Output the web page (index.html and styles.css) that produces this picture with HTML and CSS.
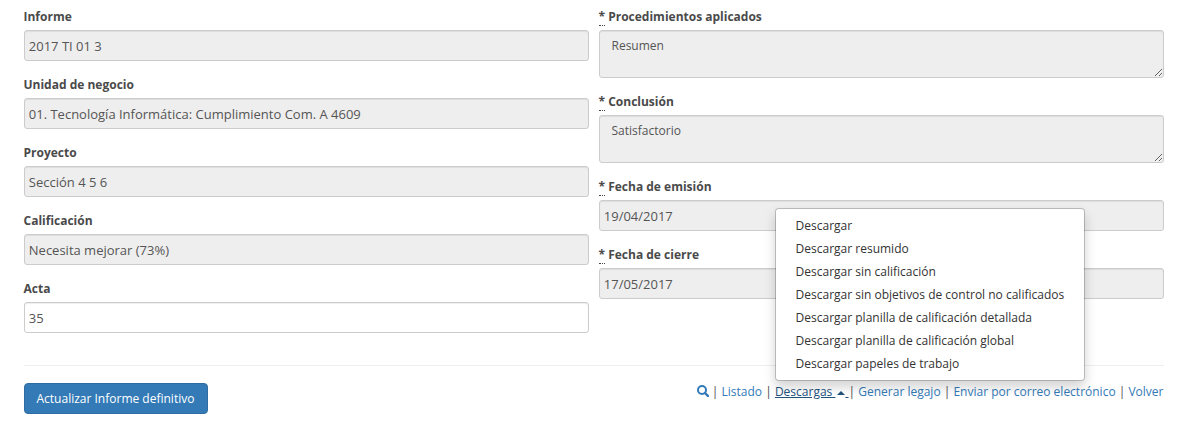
FILE: index.html
```html
<!DOCTYPE html>
<html lang="es">
<head>
<meta charset="utf-8">
<title>Informe definitivo</title>
<link rel="stylesheet" href="styles.css">
</head>
<body>
<form class="page">
  <div class="columns">
    <div class="column">
      <div class="group"><label for="informe">Informe</label><input class="control" id="informe" readonly value="2017 TI 01 3"></div>
      <div class="group"><label for="unidad">Unidad de negocio</label><input class="control" id="unidad" readonly value="01. Tecnología Informática: Cumplimiento Com. A 4609"></div>
      <div class="group"><label for="proyecto">Proyecto</label><input class="control" id="proyecto" readonly value="Sección 4 5 6"></div>
      <div class="group"><label for="calificacion">Calificación</label><input class="control" id="calificacion" readonly value="Necesita mejorar (73%)"></div>
      <div class="group"><label for="acta">Acta</label><input class="control" id="acta" value="35"></div>
    </div>
    <div class="column">
      <div class="group"><label for="proc"><abbr>*</abbr> Procedimientos aplicados</label><textarea class="control area" id="proc" readonly>Resumen</textarea></div>
      <div class="group"><label for="conc"><abbr>*</abbr> Conclusión</label><textarea class="control area" id="conc" readonly>Satisfactorio</textarea></div>
      <div class="group"><label for="emision"><abbr>*</abbr> Fecha de emisión</label><input class="control" id="emision" readonly value="19/04/2017"></div>
      <div class="group"><label for="cierre"><abbr>*</abbr> Fecha de cierre</label><input class="control" id="cierre" readonly value="17/05/2017"></div>
    </div>
  </div>
  <hr class="rule">
  <div class="footer">
    <button class="submit" type="button">Actualizar Informe definitivo</button>
    <div class="links">
      <a href="#" aria-label="Buscar"><svg class="search" viewBox="0 0 12 12"><circle cx="5" cy="5" r="4" fill="none" stroke="currentColor" stroke-width="2"/><path d="M8 8 10.9 10.9" stroke="currentColor" stroke-width="2.4" stroke-linecap="round"/></svg></a> |
      <a href="#">Listado</a> |
      <span class="dropdown"><a class="toggle" href="#">Descargas <span class="caret"></span> </a><span class="menu">
        <a href="#">Descargar</a>
        <a href="#">Descargar resumido</a>
        <a href="#">Descargar sin calificación</a>
        <a href="#">Descargar sin objetivos de control no calificados</a>
        <a href="#">Descargar planilla de calificación detallada</a>
        <a href="#">Descargar planilla de calificación global</a>
        <a href="#">Descargar papeles de trabajo</a>
      </span></span>|
      <a href="#">Generar legajo</a> |
      <a href="#">Enviar por correo electrónico</a> |
      <a href="#">Volver</a>
    </div>
  </div>
</form>
</body>
</html>
```
FILE: styles.css
```css
* { box-sizing: border-box; }
body {
  margin: 0;
  background: #fff;
  color: #4a4a4a;
  font: 12px/17px "Open Sans", sans-serif;
}
a { color: #337ab7; text-decoration: none; }
.page { padding: 8px 33.5px 0 23.5px; }
.columns { display: grid; grid-template-columns: 565px 565px; column-gap: 10px; }
.group { margin-bottom: 15px; }
label { display: block; margin-bottom: 5px; font-weight: 700; }
abbr { border-bottom: 1px dotted #444; }
.control {
  display: block;
  width: 100%;
  height: 31px;
  margin: 0;
  padding: 6px 4.3px;
  border: 1px solid #ccc;
  border-radius: 3px;
  outline: 0;
  background: #fff;
  box-shadow: inset 0 1px 1px rgba(0, 0, 0, .075);
  color: #555;
  font: 13px/17px "Open Sans", sans-serif;
}
.control[readonly] { background: #eee; }
.area { height: 48px; padding: 6px 12px; font-size: 12px; overflow: hidden; resize: vertical; }
.rule { margin: 17px 0; border: 0; border-top: 1px solid #eee; }
.footer { display: flex; justify-content: space-between; align-items: flex-start; }
.submit {
  width: 184px;
  height: 31px;
  padding: 6px 12px;
  border: 1px solid #2e6da4;
  border-radius: 4px;
  background: #337ab7;
  color: #fff;
  font: 12px/17px "Open Sans", sans-serif;
  text-align: left;
}
.links { white-space: nowrap; }
.search { width: 12px; height: 12px; vertical-align: -1px; }
.dropdown { position: relative; }
.toggle { color: #23527c; text-decoration: underline; white-space: pre; }
.caret {
  display: inline-block;
  margin-left: 2px;
  vertical-align: middle;
  border: 4px solid transparent;
  border-top: 0;
  border-bottom-color: currentColor;
}
.menu {
  position: absolute;
  left: 0;
  bottom: 19px;
  display: flex;
  flex-direction: column;
  width: 310px;
  padding: 5px 0;
  border: 1px solid rgba(0, 0, 0, .2);
  border-radius: 4px;
  background: #fff;
  background-clip: padding-box;
  box-shadow: 0 6px 12px rgba(0, 0, 0, .175);
}
.menu a { padding: 3px 19.7px; color: #333; }
```
